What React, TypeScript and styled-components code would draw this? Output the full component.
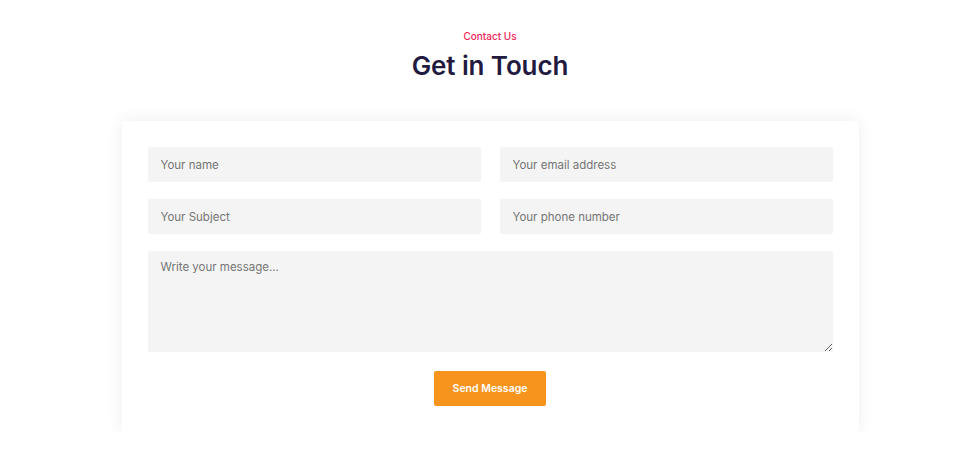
import React from 'react'
import styled, { createGlobalStyle } from 'styled-components'

const GlobalStyle = createGlobalStyle`
  html, body {
    margin: 0;
    padding: 0;
    background: #ffffff;
    font-family: Inter, "Open Sans", sans-serif;
  }
  * {
    box-sizing: border-box;
  }
`

const Section = styled.section`
  display: flex;
  flex-direction: column;
  align-items: center;
  padding-top: 29px;
`

const Eyebrow = styled.span`
  font-size: 10px;
  font-weight: 500;
  color: #ef2458;
  line-height: 14px;
`

const Title = styled.h2`
  margin: 7px 0 0;
  font-size: 26px;
  font-weight: 600;
  line-height: 32px;
  color: #221a3f;
  letter-spacing: -0.1px;
`

const Card = styled.form`
  width: 737px;
  margin-top: 39px;
  padding: 26px;
  background: #fff;
  border-radius: 3px;
  box-shadow: 0 0 18px rgba(0, 0, 0, 0.07);
  display: flex;
  flex-direction: column;
  gap: 17px;
`

const Row = styled.div`
  display: grid;
  grid-template-columns: 1fr 1fr;
  column-gap: 19px;
`

const Field = styled.input`
  height: 35px;
  border: none;
  border-radius: 2px;
  background: #f4f4f4;
  padding: 0 13px;
  font-family: inherit;
  font-size: 11.5px;
  color: #333;
  outline: none;

  ::placeholder {
    color: #6b6b6b;
  }
`

const Message = styled.textarea`
  height: 101px;
  border: none;
  border-radius: 2px;
  background: #f4f4f4;
  padding: 9px 13px;
  font-family: inherit;
  font-size: 11.5px;
  color: #333;
  outline: none;
  resize: vertical;

  ::placeholder {
    color: #6b6b6b;
  }
`

const Actions = styled.div`
  display: flex;
  justify-content: center;
  padding-top: 2px;
`

const SendButton = styled.button`
  width: 112px;
  height: 35px;
  border: none;
  border-radius: 2px;
  background: #f7941d;
  color: #fff;
  font-family: inherit;
  font-size: 10.5px;
  font-weight: 600;
  cursor: pointer;
`

export default function App() {
  return (
    <>
      <GlobalStyle />
      <Section>
        <Eyebrow>Contact Us</Eyebrow>
        <Title>Get in Touch</Title>
        <Card onSubmit={e => e.preventDefault()}>
          <Row>
            <Field type="text" placeholder="Your name" />
            <Field type="email" placeholder="Your email address" />
          </Row>
          <Row>
            <Field type="text" placeholder="Your Subject" />
            <Field type="tel" placeholder="Your phone number" />
          </Row>
          <Message placeholder="Write your message..." />
          <Actions>
            <SendButton type="submit">Send Message</SendButton>
          </Actions>
        </Card>
      </Section>
    </>
  )
}
